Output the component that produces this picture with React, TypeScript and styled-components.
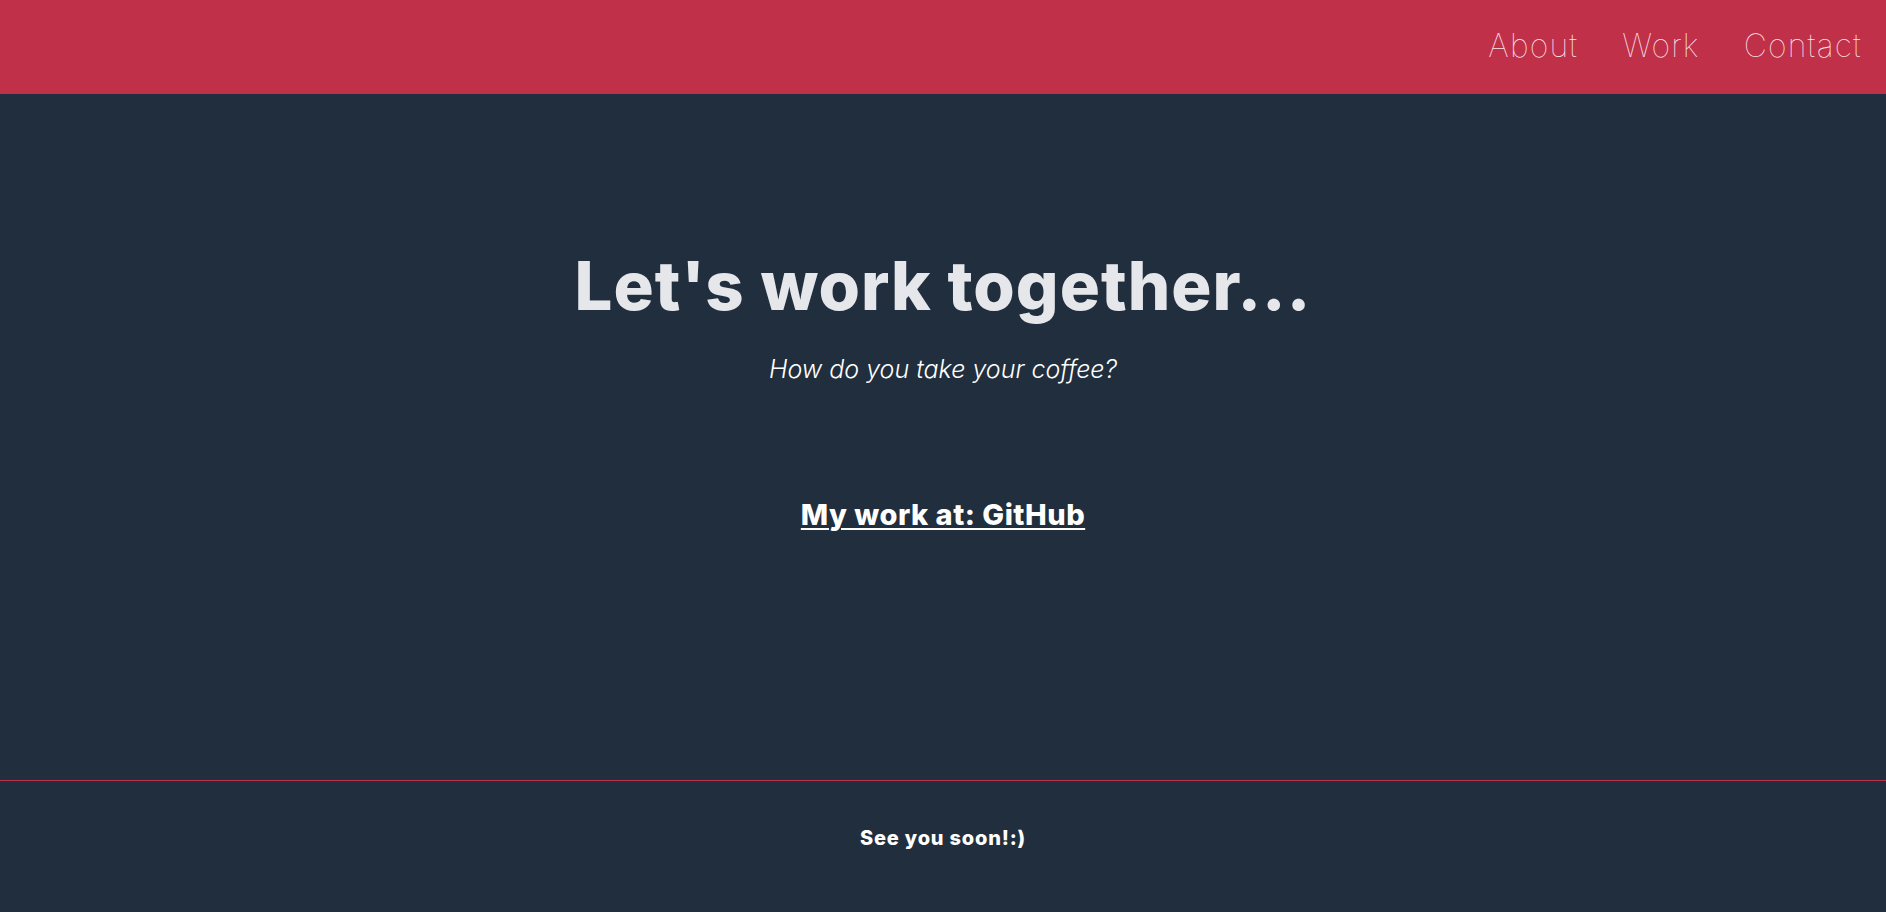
import styled, { createGlobalStyle } from "styled-components";

const colors = {
  red: "#c03048",
  navy: "#212e3d",
  heading: "#e5e7eb",
  white: "#ffffff",
  navText: "#fbe8ef",
};

const GlobalStyle = createGlobalStyle`
  html, body {
    margin: 0;
    padding: 0;
    background-color: ${colors.navy};
    font-family: Inter, "Open Sans", sans-serif;
  }
`;

const navItems = ["About", "Work", "Contact"];

export default function App() {
  return (
    <>
      <GlobalStyle />
      <Page>
        <Header>
          <Nav>
            {navItems.map((item) => (
              <NavLink key={item} href={`#${item.toLowerCase()}`}>
                {item}
              </NavLink>
            ))}
          </Nav>
        </Header>
        <Main>
          <Title>Let's work together...</Title>
          <Subtitle>How do you take your coffee?</Subtitle>
          <WorkLink href="#github">My work at: GitHub</WorkLink>
        </Main>
        <Footer>
          <FooterText>See you soon!:)</FooterText>
        </Footer>
      </Page>
    </>
  );
}

const Page = styled.div`
  display: flex;
  flex-direction: column;
  min-height: 912px;
`;

const Header = styled.header`
  display: flex;
  align-items: center;
  justify-content: flex-end;
  height: 94px;
  padding-right: 24px;
  background-color: ${colors.red};
`;

const Nav = styled.nav`
  display: flex;
  align-items: center;
  gap: 44px;
  margin-top: -2px;
`;

const NavLink = styled.a`
  color: ${colors.navText};
  font-size: 32px;
  font-weight: 100;
  letter-spacing: 1.2px;
  text-decoration: none;
  line-height: 1;
`;

const Main = styled.main`
  display: flex;
  flex-direction: column;
  align-items: center;
  box-sizing: border-box;
  height: 686px;
  padding-top: 152px;
`;

const Title = styled.h1`
  margin: 0;
  color: ${colors.heading};
  font-size: 67px;
  font-weight: 800;
  line-height: 80px;
  letter-spacing: 1px;
`;

const Subtitle = styled.p`
  margin: 28px 0 0;
  color: ${colors.white};
  font-size: 25px;
  font-style: italic;
  font-weight: 300;
  line-height: 30px;
`;

const WorkLink = styled.a`
  margin-top: 113px;
  color: ${colors.white};
  font-size: 29px;
  font-weight: 800;
  line-height: 36px;
  letter-spacing: 0.5px;
  text-decoration: underline;
  text-decoration-thickness: 2px;
  text-underline-offset: 3px;
`;

const Footer = styled.footer`
  display: flex;
  justify-content: center;
  flex: 1;
  border-top: 1px solid ${colors.red};
  padding-top: 45px;
`;

const FooterText = styled.p`
  margin: 0;
  color: ${colors.white};
  font-size: 20px;
  font-weight: 800;
  line-height: 24px;
  letter-spacing: 0.8px;
`;
